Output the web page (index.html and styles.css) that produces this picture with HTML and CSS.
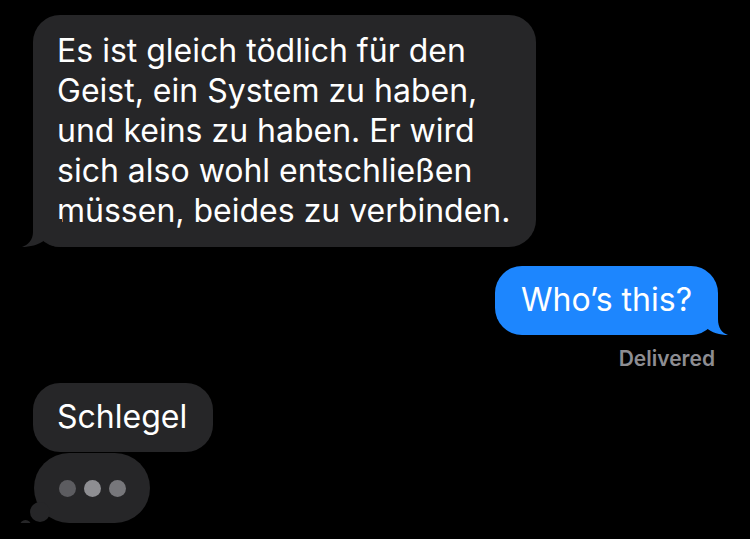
FILE: index.html
```html
<!DOCTYPE html>
<html lang="de">
<head>
    <meta charset="UTF-8">
    <meta name="viewport" content="width=device-width, initial-scale=1.0">
    <title>Nachrichten</title>
    <link rel="stylesheet" href="styles.css">
</head>
<body>
  <div class="thread">
    <div class="bubble incoming tail">
      Es ist gleich tödlich für den<br>
      Geist, ein System zu haben,<br>
      und keins zu haben. Er wird<br>
      sich also wohl entschließen<br>
      müssen, beides zu verbinden.
      <svg class="tail-left" width="40" height="28" viewBox="0 0 40 28"><path d="M11 0 L11 13 C11 21 6 26 0 28 C8 28 16 26 23 21 C26 25 30 28 40 28 L40 0 Z" /></svg>
    </div>

    <div class="bubble outgoing tail">
      Who’s this?
      <svg class="tail-right" width="40" height="28" viewBox="0 0 40 28"><path d="M30 0 L30 12 C30 21 34 26 40 28 C32 28 24 26 17 20 C14 24 10 28 0 28 L0 0 Z" /></svg>
    </div>
    <div class="status">Delivered</div>

    <div class="bubble incoming short">Schlegel</div>

    <div class="typing">
      <span class="dot d1"></span>
      <span class="dot d2"></span>
      <span class="dot d3"></span>
      <span class="puff big"></span>
      <span class="puff small"></span>
    </div>
  </div>
</body>
</html>
```

FILE: styles.css
```css
body {
    margin: 0;
    background: #000;
    font-family: Inter, "Liberation Sans", Arial, sans-serif;
    color: #fff;
}

.thread {
    display: flex;
    flex-direction: column;
    padding: 15px 32px 0 33px;
}

.bubble {
    position: relative;
    font-size: 32px;
    line-height: 40px;
    padding: 16px 26px 16px 24px;
    border-radius: 27px;
}

.incoming {
    align-self: flex-start;
    background: #262628;
}

.outgoing {
    align-self: flex-end;
    background: #1d86fe;
    margin-top: 19px;
    padding: 14px 26px 15px 26px;
}

.short {
    padding-top: 14px;
    padding-bottom: 15px;
}

.tail svg {
    position: absolute;
    bottom: 0;
}

.tail-left {
    left: -11px;
    fill: #262628;
}

.tail-right {
    right: -10px;
    fill: #1d86fe;
}

.status {
    align-self: flex-end;
    margin: 12px 3px 12px 0;
    font-size: 21px;
    line-height: 24px;
    font-weight: 600;
    color: #8d8d92;
}

.typing {
    position: relative;
    align-self: flex-start;
    display: flex;
    align-items: center;
    gap: 8px;
    height: 70px;
    margin: 1px 0 0 1px;
    padding: 0 24px 0 25px;
    border-radius: 35px;
    background: #262628;
}

.dot {
    width: 17px;
    height: 17px;
    border-radius: 50%;
}

.d1 { background: #5c5c60; }
.d2 { background: #8e8e92; }
.d3 { background: #77777b; }

.puff {
    position: absolute;
    border-radius: 50%;
    background: #262628;
}

.puff.big {
    left: -4px;
    top: 49px;
    width: 20px;
    height: 20px;
}

.puff.small {
    left: -14px;
    top: 67px;
    width: 11px;
    height: 11px;
}
```
